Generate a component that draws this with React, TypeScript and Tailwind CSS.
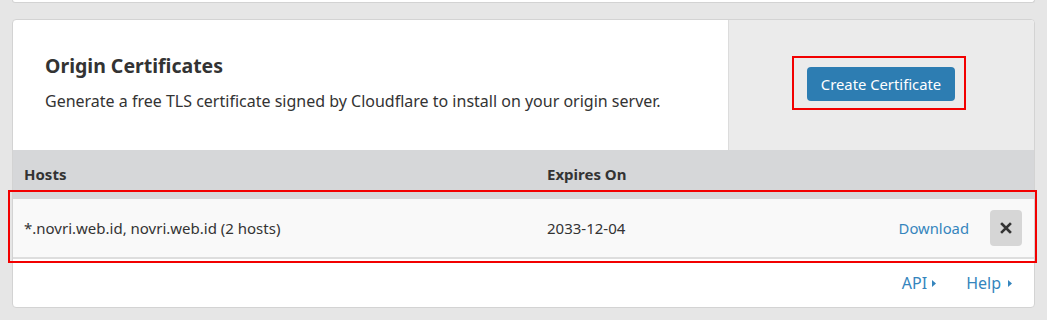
import React from 'react';

const font = { fontFamily: '"Noto Sans", "Open Sans", sans-serif' };

function RedMark({ className }: { className: string }) {
  return <span className={`pointer-events-none absolute border-2 border-[#f20000] ${className}`}></span>;
}

export default function App() {
  return (
    <div className="min-h-[320px] w-[1047px] bg-[#e6e6e6] text-[#333]" style={font}>
      {/* previous card edge */}
      <div className="mx-[12px] h-[3px] rounded-b-[4px] border-b border-x border-[#d3d3d3] bg-white"></div>

      <div className="relative mx-[12px] mt-[16px] flex flex-col rounded-[4px] border border-[#d3d3d3] bg-white">
        <div className="flex h-[130px]">
          <div className="flex flex-1 flex-col pl-[32px] pt-[33px]">
            <h2 className="text-[19.5px] font-bold leading-[26px] text-[#333]">Origin Certificates</h2>
            <p className="mt-[11px] text-[16px] leading-[22px] text-[#333]">
              Generate a free TLS certificate signed by Cloudflare to install on your origin server.
            </p>
          </div>
          <div className="flex w-[306px] items-center justify-center rounded-tr-[4px] border-l border-[#dcdcdc] bg-[#ebebeb]">
            <div className="relative -mt-[2px] -ml-[1px]">
              <button className="h-[34px] w-[148px] rounded-[4px] bg-[#2d7db2] text-[14.8px] text-white">
                Create Certificate
              </button>
              <RedMark className="-left-[15px] -right-[11px] -top-[11px] -bottom-[9px]" />
            </div>
          </div>
        </div>

        <div className="flex h-[49px] items-center bg-[#d6d7d9] text-[15px] font-bold">
          <div className="w-[534px] pl-[11px]">Hosts</div>
          <div>Expires On</div>
        </div>

        <div className="relative flex h-[60px] items-center border-b-2 border-[#dedede] bg-[#f9f9f9] text-[15px]">
          <div className="w-[534px] pl-[11px]">*.novri.web.id, novri.web.id (2 hosts)</div>
          <div className="flex-1">2033-12-04</div>
          <a className="mr-[21px] text-[14.8px] text-[#3585bd]">Download</a>
          <button className="mr-[12px] flex h-[36px] w-[32px] items-center justify-center rounded-[4px] bg-[#d6d6d6]">
            <svg width="12" height="12" viewBox="0 0 12 12">
              <path d="M2 2 L10 10 M10 2 L2 10" stroke="#333" strokeWidth="2.6" strokeLinecap="square" />
            </svg>
          </button>
          <RedMark className="-left-[5px] -right-[3px] -top-[9px] -bottom-[6px]" />
        </div>

        <div className="flex h-[48px] items-center justify-end gap-[30px] pr-[22px] text-[16px] text-[#3585bd]">
          <a className="flex items-center gap-[5px]">
            API
            <svg width="4" height="7" viewBox="0 0 4 7"><path d="M0 0 L4 3.5 L0 7 Z" fill="#3585bd" /></svg>
          </a>
          <a className="flex items-center gap-[7px]">
            Help
            <svg width="4" height="7" viewBox="0 0 4 7"><path d="M0 0 L4 3.5 L0 7 Z" fill="#3585bd" /></svg>
          </a>
        </div>
      </div>
    </div>
  );
}
